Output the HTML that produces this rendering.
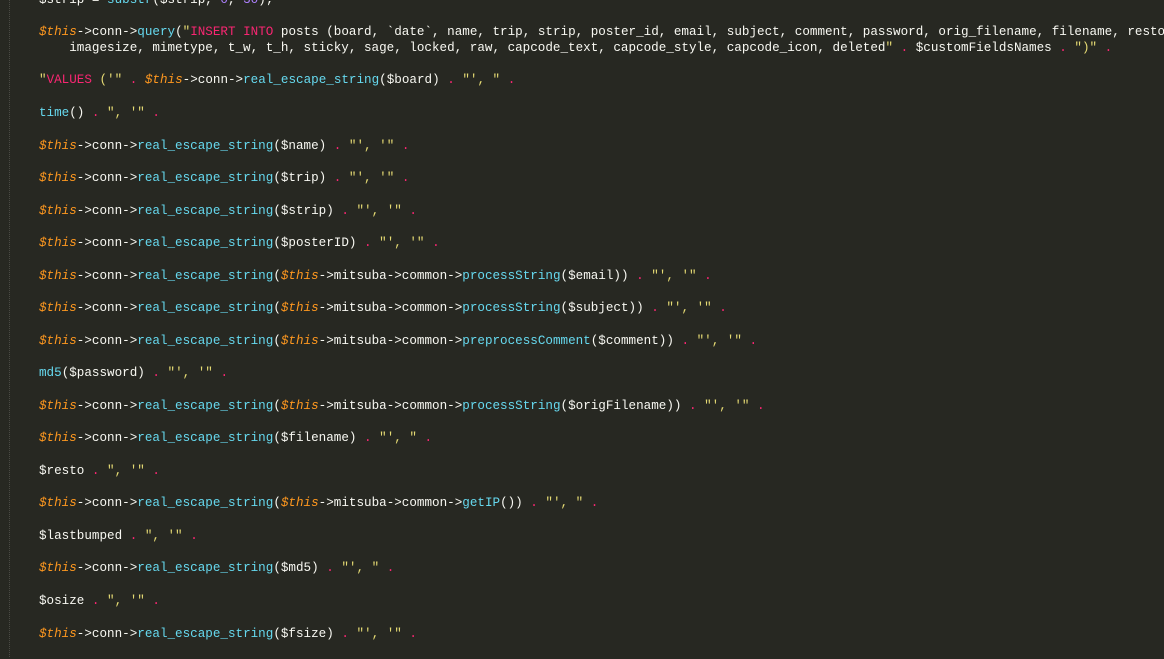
<!DOCTYPE html>
<html><head><meta charset="utf-8"><style>
html,body{margin:0;padding:0;background:#272822;width:1164px;height:657px;overflow:hidden}
.w{position:absolute;left:0;top:2px;width:1164px;height:657px}
.l{position:absolute;left:39px;white-space:pre;font-family:"Liberation Mono",monospace;font-size:12.6px;line-height:16px;color:#f8f8f2;height:16px}
.g{position:absolute;left:9px;top:0;width:0;height:657px;border-left:1px dotted #4a4a44}
.t{color:#fd971f;font-style:italic}.p{color:#f92672}.f{color:#66d9ef}.s{color:#e6db74}.n{color:#ae81ff}
</style></head><body>
<div class="g"></div>
<div class="w">
<div class="l" style="top:-10px">$strip = <span class="f">substr</span>($strip, <span class="n">0</span>, <span class="n">30</span>);</div>
<div class="l" style="top:22px"><span class="t">$this</span>-&gt;conn-&gt;<span class="f">query</span>(<span class="s">"</span><span class="p">INSERT INTO</span> posts (board, `date`, name, trip, strip, poster_id, email, subject, comment, password, orig_filename, filename, resto,</div>
<div class="l" style="top:38px">    imagesize, mimetype, t_w, t_h, sticky, sage, locked, raw, capcode_text, capcode_style, capcode_icon, deleted<span class="s">"</span> <span class="p">.</span> $customFieldsNames <span class="p">.</span> <span class="s">")"</span> <span class="p">.</span></div>
<div class="l" style="top:70px"><span class="s">"</span><span class="p">VALUES</span> <span class="s">('"</span> <span class="p">.</span> <span class="t">$this</span>-&gt;conn-&gt;<span class="f">real_escape_string</span>($board) <span class="p">.</span> <span class="s">"', "</span> <span class="p">.</span></div>
<div class="l" style="top:103px"><span class="f">time</span>() <span class="p">.</span> <span class="s">", '"</span> <span class="p">.</span></div>
<div class="l" style="top:136px"><span class="t">$this</span>-&gt;conn-&gt;<span class="f">real_escape_string</span>($name) <span class="p">.</span> <span class="s">"', '"</span> <span class="p">.</span></div>
<div class="l" style="top:168px"><span class="t">$this</span>-&gt;conn-&gt;<span class="f">real_escape_string</span>($trip) <span class="p">.</span> <span class="s">"', '"</span> <span class="p">.</span></div>
<div class="l" style="top:201px"><span class="t">$this</span>-&gt;conn-&gt;<span class="f">real_escape_string</span>($strip) <span class="p">.</span> <span class="s">"', '"</span> <span class="p">.</span></div>
<div class="l" style="top:233px"><span class="t">$this</span>-&gt;conn-&gt;<span class="f">real_escape_string</span>($posterID) <span class="p">.</span> <span class="s">"', '"</span> <span class="p">.</span></div>
<div class="l" style="top:266px"><span class="t">$this</span>-&gt;conn-&gt;<span class="f">real_escape_string</span>(<span class="t">$this</span>-&gt;mitsuba-&gt;common-&gt;<span class="f">processString</span>($email)) <span class="p">.</span> <span class="s">"', '"</span> <span class="p">.</span></div>
<div class="l" style="top:298px"><span class="t">$this</span>-&gt;conn-&gt;<span class="f">real_escape_string</span>(<span class="t">$this</span>-&gt;mitsuba-&gt;common-&gt;<span class="f">processString</span>($subject)) <span class="p">.</span> <span class="s">"', '"</span> <span class="p">.</span></div>
<div class="l" style="top:331px"><span class="t">$this</span>-&gt;conn-&gt;<span class="f">real_escape_string</span>(<span class="t">$this</span>-&gt;mitsuba-&gt;common-&gt;<span class="f">preprocessComment</span>($comment)) <span class="p">.</span> <span class="s">"', '"</span> <span class="p">.</span></div>
<div class="l" style="top:363px"><span class="f">md5</span>($password) <span class="p">.</span> <span class="s">"', '"</span> <span class="p">.</span></div>
<div class="l" style="top:396px"><span class="t">$this</span>-&gt;conn-&gt;<span class="f">real_escape_string</span>(<span class="t">$this</span>-&gt;mitsuba-&gt;common-&gt;<span class="f">processString</span>($origFilename)) <span class="p">.</span> <span class="s">"', '"</span> <span class="p">.</span></div>
<div class="l" style="top:428px"><span class="t">$this</span>-&gt;conn-&gt;<span class="f">real_escape_string</span>($filename) <span class="p">.</span> <span class="s">"', "</span> <span class="p">.</span></div>
<div class="l" style="top:461px">$resto <span class="p">.</span> <span class="s">", '"</span> <span class="p">.</span></div>
<div class="l" style="top:493px"><span class="t">$this</span>-&gt;conn-&gt;<span class="f">real_escape_string</span>(<span class="t">$this</span>-&gt;mitsuba-&gt;common-&gt;<span class="f">getIP</span>()) <span class="p">.</span> <span class="s">"', "</span> <span class="p">.</span></div>
<div class="l" style="top:526px">$lastbumped <span class="p">.</span> <span class="s">", '"</span> <span class="p">.</span></div>
<div class="l" style="top:558px"><span class="t">$this</span>-&gt;conn-&gt;<span class="f">real_escape_string</span>($md5) <span class="p">.</span> <span class="s">"', "</span> <span class="p">.</span></div>
<div class="l" style="top:591px">$osize <span class="p">.</span> <span class="s">", '"</span> <span class="p">.</span></div>
<div class="l" style="top:624px"><span class="t">$this</span>-&gt;conn-&gt;<span class="f">real_escape_string</span>($fsize) <span class="p">.</span> <span class="s">"', '"</span> <span class="p">.</span></div>
</div>
</body></html>
